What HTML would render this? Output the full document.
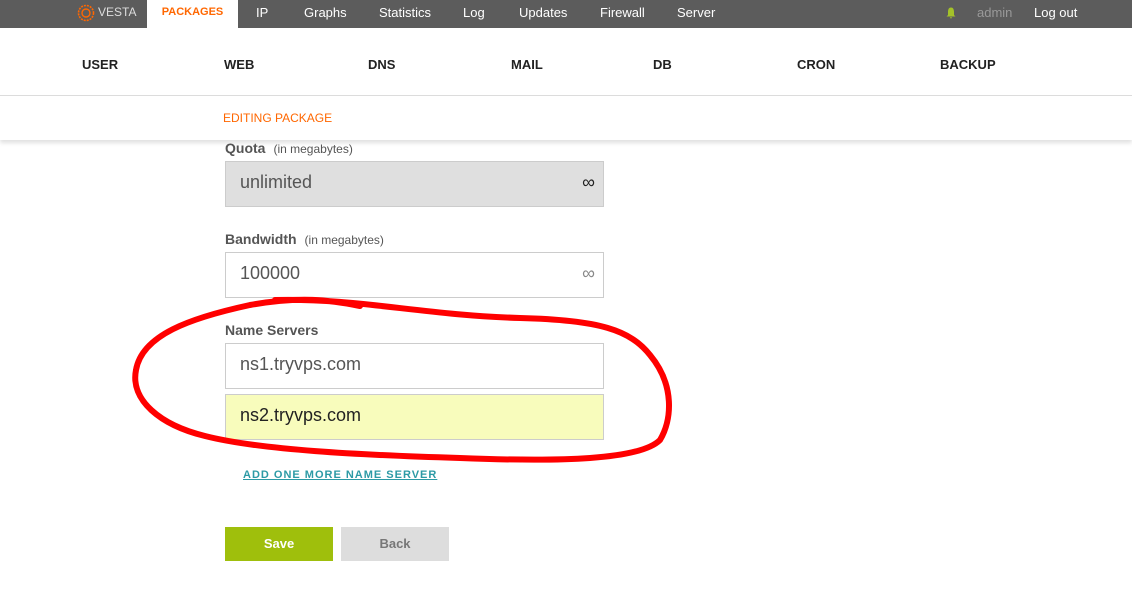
<!DOCTYPE html>
<html><head><meta charset="utf-8"><style>
*{margin:0;padding:0;box-sizing:border-box}
body{width:1132px;height:607px;overflow:hidden;background:#fff;font-family:"Liberation Sans",Arial,sans-serif;position:relative}
.top{position:absolute;left:0;top:0;width:1132px;height:28px;background:#5c5c5c}
.top span{position:absolute;top:5px;font-size:13px;color:#fff}
.pk{position:absolute;left:147px;top:0;width:91px;height:28px;background:#fff;color:#ff6701;font-size:11px;font-weight:bold;text-align:center;line-height:24px}
.menu{position:absolute;top:28px;left:0;width:1132px;height:68px;border-bottom:1px solid #ddd}
.menu span{position:absolute;top:29px;font-size:13px;font-weight:bold;color:#222}
.sub{position:absolute;top:96px;left:0;width:1132px;height:44px;box-shadow:0 3px 4px rgba(0,0,0,.12);background:#fff}
.sub span{position:absolute;left:223px;top:15px;color:#ff6701;font-size:12px}
.lbl{position:absolute;left:225px;font-size:14px;font-weight:bold;color:#555}
.lbl i{font-style:normal;font-weight:normal;font-size:12px;margin-left:8px}
.inp{position:absolute;left:225px;width:379px;height:46px;border:1px solid #ccc;font-size:18px;color:#555;padding:10px 14px}
.inf{position:absolute;right:8px;top:10px;font-size:18px;color:#888}
.btn{position:absolute;top:527px;width:108px;height:34px;font-size:13px;font-weight:bold;text-align:center;line-height:34px}
</style></head><body>
<div class="top">
<svg style="position:absolute;left:77px;top:4px" width="18" height="18"><circle cx="9" cy="9" r="7.5" fill="none" stroke="#ff6701" stroke-width="1.6" stroke-dasharray="2 1"/><circle cx="9" cy="9" r="4" fill="none" stroke="#ff6701" stroke-width="1.4"/></svg>
<span style="left:98px;font-size:12px;color:#ddd">VESTA</span>
<div class="pk">PACKAGES</div>
<span style="left:256px">IP</span><span style="left:304px">Graphs</span><span style="left:379px">Statistics</span><span style="left:463px">Log</span><span style="left:519px">Updates</span><span style="left:600px">Firewall</span><span style="left:677px">Server</span>
<svg style="position:absolute;left:946px;top:7px" width="10" height="12"><path d="M5 0.5 C2.5 0.5 2 3 2 5 L2 8 L0.5 9.5 L9.5 9.5 L8 8 L8 5 C8 3 7.5 0.5 5 0.5Z M3.8 10.3 L6.2 10.3 L5 11.8Z" fill="#a4c229"/></svg>
<span style="left:977px;color:#999">admin</span><span style="left:1034px">Log out</span>
</div>
<div class="menu"><span style="left:82px">USER</span><span style="left:224px">WEB</span><span style="left:368px">DNS</span><span style="left:511px">MAIL</span><span style="left:653px">DB</span><span style="left:797px">CRON</span><span style="left:940px">BACKUP</span></div>
<div class="sub"><span>EDITING PACKAGE</span></div>
<div class="lbl" style="top:140px">Quota<i>(in megabytes)</i></div>
<div class="inp" style="top:161px;background:#dfdfdf">unlimited<span class="inf" style="color:#222">∞</span></div>
<div class="lbl" style="top:231px">Bandwidth<i>(in megabytes)</i></div>
<div class="inp" style="top:252px">100000<span class="inf">∞</span></div>
<div class="lbl" style="top:322px">Name Servers</div>
<div class="inp" style="top:343px">ns1.tryvps.com</div>
<div class="inp" style="top:394px;background:#f8fcbc;color:#222">ns2.tryvps.com</div>
<div style="position:absolute;left:243px;top:469px;font-size:11px;font-weight:bold;color:#2c9aa5;text-decoration:underline;letter-spacing:1px">ADD ONE MORE NAME SERVER</div>
<div class="btn" style="left:225px;background:#9fbf0c;color:#fff">Save</div>
<div class="btn" style="left:341px;background:#ddd;color:#777">Back</div>
<svg style="position:absolute;left:0;top:0" width="1132" height="607"><path d="M275 300 C360 298 420 315 520 318 C600 320 630 330 650 355 C675 385 672 420 660 440 C640 460 560 462 460 458 C360 455 260 450 205 436 C160 425 130 400 136 370 C142 335 190 318 250 305 C300 296 330 300 360 306" fill="none" stroke="#f00" stroke-width="6" stroke-linecap="round"/></svg>
</body></html>
